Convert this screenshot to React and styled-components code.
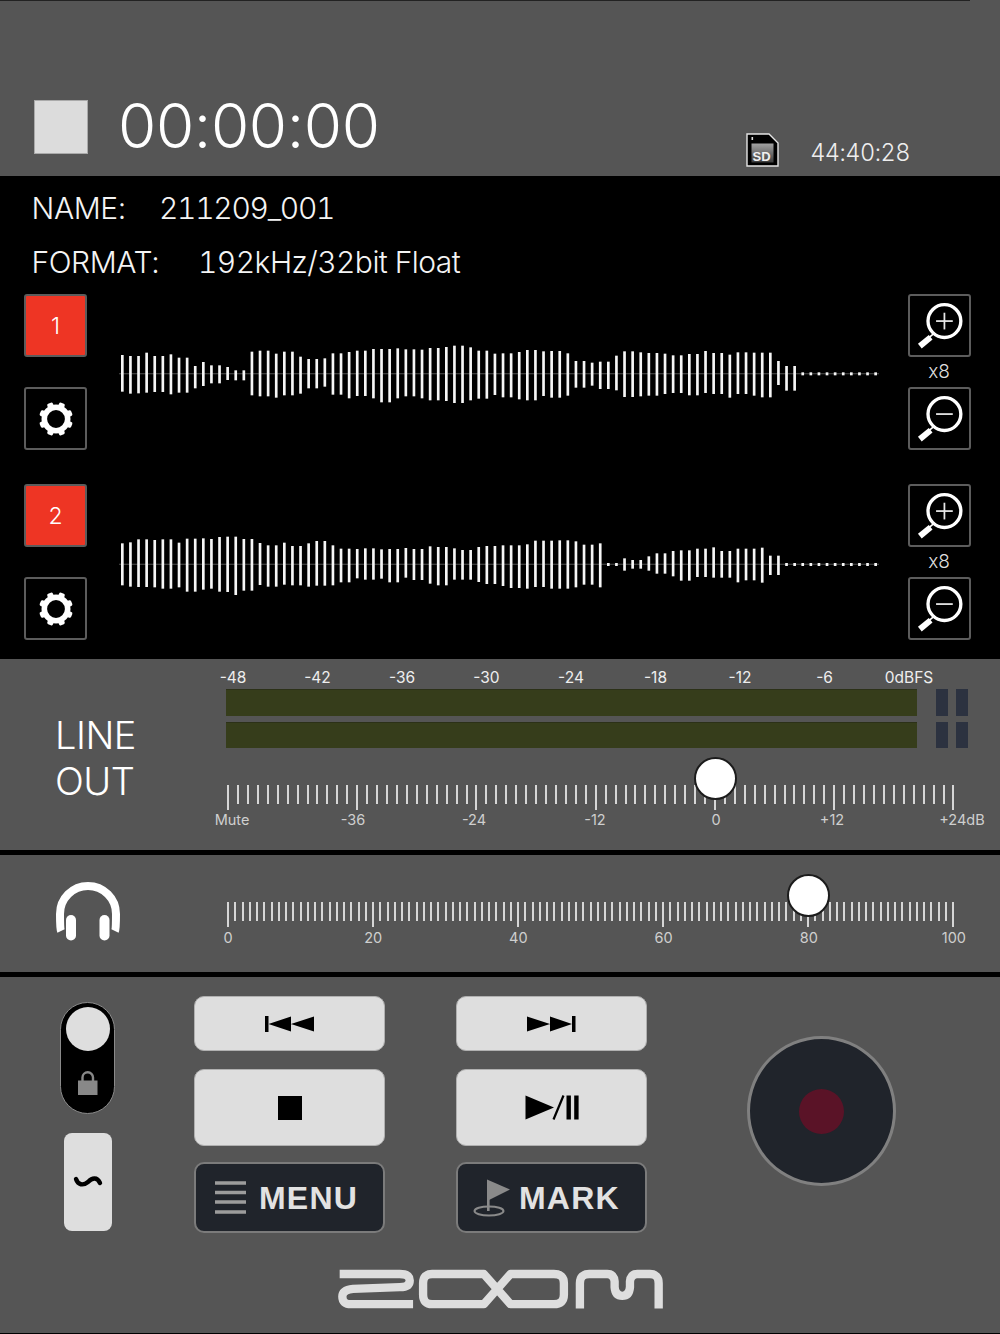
import React from "react";
import styled, { createGlobalStyle } from "styled-components";

const Global = createGlobalStyle`
  html, body { margin: 0; padding: 0; background: #555; }
  body { font-family: Inter, "Noto Sans", "Liberation Sans", sans-serif; }
`;

const Page = styled.div`
  width: 1000px;
  height: 1334px;
  background: #555;
  overflow: hidden;
  color: #fff;
  border-bottom: 1px solid #000;
  box-sizing: border-box;
`;

const Header = styled.header`
  height: 176px;
  box-sizing: border-box;
  display: flex;
  align-items: flex-start;
  padding: 100px 90px 0 34px;
  background: linear-gradient(#222 0 1px, #555 1px) no-repeat 0 0 / 970px 100%, #555;
`;
const StopState = styled.div`
  width: 54px;
  height: 54px;
  box-sizing: border-box;
  background: #dcdcdc;
  border: 1px solid #aaa;
`;
const Timer = styled.div`
  font-size: 62px;
  font-weight: 350;
  line-height: 52px;
  margin-left: 30px;
  letter-spacing: -0.4px;
  color: #fff;
`;
const Remain = styled.div`
  margin-left: auto;
  margin-top: 33px;
  display: flex;
  align-items: flex-start;
  gap: 31px;
`;
const RemainText = styled.span`
  font-size: 23.5px;
  font-weight: 300;
  line-height: 39px;
  color: #eee;
  font-variant-numeric: tabular-nums;
  letter-spacing: -0.5px;
`;

const Panel = styled.section`
  height: 483px;
  box-sizing: border-box;
  background: #000;
  padding: 5px 30px 0 24px;
`;
const InfoRow = styled.div`
  display: flex;
  height: 54px;
  align-items: center;
  margin-left: 7.5px;
  font-size: 30px;
  font-weight: 300;
  color: #f4f4f4;
`;
const InfoLabel = styled.span`
  width: ${(p) => p.$w}px;
  letter-spacing: -0.4px;
`;
const InfoValue = styled.span`
  font-variant-numeric: tabular-nums;
  letter-spacing: ${(p) => p.$track}px;
`;
const Track = styled.div`
  display: flex;
  height: 156px;
  margin-top: ${(p) => p.$top}px;
`;
const ButtonStack = styled.div`
  width: 62px;
  display: flex;
  flex-direction: column;
  justify-content: space-between;
  align-items: center;
`;
const SquareBtn = styled.div`
  width: 63px;
  height: 63px;
  box-sizing: border-box;
  border: 2px solid #5c5c5c;
  border-radius: 3px;
  background: ${(p) => (p.$on ? "#ee3524" : "#000")};
  color: #fff;
  display: flex;
  align-items: center;
  justify-content: center;
  font-size: 23px;
  font-weight: 300;
  padding-left: 1px;
`;
const WaveWrap = styled.div`
  flex: 1;
  padding: 41px 0 0 33px;
`;
const Zoomed = styled.span`
  font-size: 19px;
  font-weight: 300;
  color: #ddd;
  line-height: 20px;
`;

const LineSection = styled.section`
  height: 191px;
  box-sizing: border-box;
  display: flex;
  background: #555;
`;
const Divider = styled.div`
  height: ${(p) => p.$h}px;
  background: #000;
`;
const SideCol = styled.div`
  width: 150px;
  flex: none;
  box-sizing: border-box;
  padding-left: 56px;
  padding-top: ${(p) => p.$top}px;
`;
const BigLabel = styled.div`
  font-size: 38px;
  font-weight: 300;
  line-height: 46px;
  letter-spacing: -0.5px;
  margin-left: -1px;
  color: #fff;
`;
const MainCol = styled.div`
  flex: 1;
  min-width: 0;
`;
const DbLabels = styled.div`
  display: grid;
  grid-template-columns: repeat(9, 84.5px);
  padding: 10px 0 2px 40.75px;
  font-size: 15.5px;
  line-height: 18px;
  color: #eee;
  text-align: center;
`;
const MeterRow = styled.div`
  display: flex;
  margin: ${(p) => p.$top}px 0 0 76px;
  height: 26.5px;
`;
const Meter = styled.div`
  width: 691px;
  box-sizing: border-box;
  background: #363d1b;
  border-top: 1px solid #2c3118;
`;
const Clip = styled.div`
  width: 12px;
  margin-left: ${(p) => p.$gap}px;
  background: #2c3240;
`;
const Scale = styled.div`
  position: relative;
  width: 728px;
  margin: ${(p) => p.$top}px 0 0 77px;
  display: flex;
  justify-content: space-between;
  align-items: flex-start;
`;
const Tick = styled.i`
  display: block;
  width: 2px;
  height: ${(p) => (p.$long ? 25 : 19)}px;
  background: #d6d6d6;
`;
const Knob = styled.div`
  position: absolute;
  top: -28px;
  left: ${(p) => p.$left}px;
  width: 43px;
  height: 43px;
  box-sizing: border-box;
  border-radius: 50%;
  background: radial-gradient(circle, #fff 0 72%, #e8e8e8 84%, #8c8c8c 100%);
  border: 2px solid #1c1c1c;
`;
const ScaleLabels = styled.div`
  display: grid;
  grid-template-columns: ${(p) => p.$cols};
  margin: ${(p) => p.$top}px 0 0 ${(p) => p.$left}px;
  font-size: 14.5px;
  line-height: 15px;
  color: #cfcfcf;
  text-align: center;
`;
const PhoneSection = styled.section`
  height: 117px;
  display: flex;
  background: #555;
`;

const Controls = styled.section`
  box-sizing: border-box;
  padding: 19px 0 0;
`;
const ControlRow = styled.div`
  display: flex;
  align-items: flex-start;
  padding-left: 60px;
`;
const LeftCol = styled.div`
  width: 55px;
  padding-top: 6px;
  display: flex;
  flex-direction: column;
  align-items: center;
  gap: 19px;
`;
const LockToggle = styled.div`
  width: 55px;
  height: 112px;
  box-sizing: border-box;
  background: #000;
  border: 1px solid #8a8a8a;
  border-radius: 28px;
  display: flex;
  flex-direction: column;
  align-items: center;
  padding-top: 4px;
`;
const LockThumb = styled.div`
  width: 44px;
  height: 44px;
  border-radius: 50%;
  background: #dedede;
  margin-bottom: 19px;
`;
const TildeBtn = styled.div`
  width: 48px;
  height: 98px;
  border-radius: 8px;
  background: #dedede;
  display: flex;
  align-items: center;
  justify-content: center;
`;
const ButtonGrid = styled.div`
  margin-left: 79px;
  display: grid;
  grid-template-columns: 191px 191px;
  grid-template-rows: 55px 79px 71px;
  column-gap: 71px;
  row-gap: 16px;
`;
const LightBtn = styled.div`
  box-sizing: border-box;
  height: ${(p) => p.$h}px;
  align-self: end;
  background: #dedede;
  border: 1px solid #b0b0b0;
  border-radius: 10px;
  display: flex;
  align-items: center;
  justify-content: center;
`;
const DarkBtn = styled.div`
  box-sizing: border-box;
  background: #20242b;
  border: 2px solid #7b7b7b;
  border-radius: 10px;
  display: flex;
  align-items: center;
  padding-left: ${(p) => p.$pad}px;
  gap: ${(p) => p.$gap}px;
`;
const DarkText = styled.span`
  font-family: "Liberation Sans", Arial, sans-serif;
  font-weight: 700;
  font-size: 32px;
  letter-spacing: 1.2px;
  color: #e2e2e2;
  line-height: 1;
`;
const RecBtn = styled.div`
  margin: 40px 0 0 100px;
  width: 149px;
  height: 150px;
  box-sizing: border-box;
  border-radius: 50%;
  background: #20242b;
  border: 3px solid #808080;
  display: flex;
  align-items: center;
  justify-content: center;
`;
const RecDot = styled.div`
  width: 45px;
  height: 45px;
  border-radius: 50%;
  background: #5a1327;
`;
const LogoWrap = styled.div`
  display: flex;
  justify-content: center;
  margin-top: 35px;
`;

const W1 = [[60,170],[63,176],[63,175],[53,173],[63,171],[63,171],[58,178],[68,173],[68,173],[93,160],[81,153],[91,145],[91,145],[96,135],[106,136],[106,136],[50,181],[47,184],[47,184],[56,188],[50,181],[50,181],[65,176],[72,160],[72,160],[70,155],[55,179],[55,179],[51,190],[47,183],[47,183],[42,190],[42,202],[42,202],[40,190],[43,184],[43,184],[44,190],[39,196],[39,196],[36,198],[32,204],[32,204],[37,196],[47,191],[47,191],[56,180],[55,187],
[55,187],[51,193],[45,196],[45,196],[49,183],[48,188],[48,188],[55,182],[78,158],[78,158],[83,152],[80,162],[80,162],[62,166],[49,186],[49,186],[52,184],[54,182],[54,182],[56,177],[61,174],[61,174],[57,181],[57,181],[48,174],[54,177],[54,177],[59,188],[52,177],[52,177],[53,182],[53,187],[53,187],[78,150],[93,167],[93,167],
...Array(10).fill([112,121])];

const W2 = [[55,181],[52,185],[43,186],[43,186],[45,187],[43,191],[43,191],[53,187],[41,200],[41,200],[40,194],[42,191],[36,200],[35,201],[35,210],[42,197],[42,197],[54,180],[61,185],[61,185],[53,179],[63,181],[63,181],[55,185],[48,182],[48,182],[61,181],[71,172],[71,172],[72,160],[70,164],[70,164],[73,161],[72,172],[72,172],[69,158],[72,165],[72,165],[64,176],[66,181],[66,181],[70,164],[75,164],[75,164],[66,171],[63,177],[63,177],[61,183],
[61,189],[61,189],[58,191],[47,186],[47,186],[47,191],[46,191],[46,191],[49,187],[59,179],[59,179],[55,187],
[114,123],[114,123],
[100,137],[105,131],[105,131],[94,137],[85,146],[85,146],[78,154],[76,167],[76,167],[71,156],[71,156],[67,158],[78,158],[78,158],[71,172],[71,166],[71,166],[68,173],[92,150],[92,150],
...Array(12).fill([114,123])];

function Wave({ data, center, line }) {
  return (
    <svg width="760" height="80" viewBox="0 0 2280 240" style={{ display: "block" }}>
      <rect x="0" y={center - 2} width="2280" height="4" fill={line} />
      {data.map((b, i) => (
        <rect key={i} x={10 + i * 24.3 - 4} y={b[0]} width="8" height={b[1] - b[0]} fill="#f6f6f6" />
      ))}
    </svg>
  );
}

function Gear() {
  const t = [22.5, 67.5, 112.5, 157.5, 202.5, 247.5, 292.5, 337.5];
  return (
    <svg width="36" height="36" viewBox="0 0 36 36">
      <circle cx="18" cy="18" r="11.7" fill="none" stroke="#fff" strokeWidth="5.6" />
      {t.map((a) => (
        <rect key={a} x="15" y="1" width="6" height="6" rx="1.6" fill="#fff" transform={`rotate(${a} 18 18)`} />
      ))}
    </svg>
  );
}

function Magnifier({ plus }) {
  return (
    <svg width="59" height="59" viewBox="0 0 59 59">
      <circle cx="34" cy="25" r="16.7" fill="none" stroke="#fff" strokeWidth="3.4" />
      <path d="M24 37 L18 42" stroke="#fff" strokeWidth="1.6" />
      <path d="M9 50.5 L20 41.5" stroke="#fff" strokeWidth="6" />
      <path d="M25.5 25 H42.5" stroke="#e8e8e8" strokeWidth="1.8" />
      {plus && <path d="M34 16.5 V33.5" stroke="#e8e8e8" strokeWidth="1.8" />}
    </svg>
  );
}

function SdIcon() {
  return (
    <svg width="33" height="34" viewBox="0 0 33 34" style={{ display: "block" }}>
      <defs>
        <linearGradient id="sdg" x1="0" y1="0" x2="0" y2="1">
          <stop offset="0" stopColor="#a2a2a2" />
          <stop offset="1" stopColor="#3c3c3c" />
        </linearGradient>
      </defs>
      <path d="M1 1 H23 L32 10 V33 H1 Z" fill="#000" stroke="#e4e4e4" strokeWidth="1.4" />
      <rect x="5.5" y="10.5" width="22" height="19" fill="url(#sdg)" />
      <rect x="5.5" y="4" width="1.6" height="3" fill="#ddd" />
      <text x="15.5" y="28" textAnchor="middle" fontFamily="Liberation Sans, sans-serif" fontWeight="700" fontSize="13" fill="#f0f0f0">SD</text>
    </svg>
  );
}

function Headphones() {
  return (
    <svg width="64" height="60" viewBox="0 0 64 60" style={{ display: "block" }}>
      <path d="M5 49 Q4 47 4 32 A28 28 0 0 1 60 32 Q60 47 59 49" fill="none" stroke="#fff" strokeWidth="8" />
      <rect x="10" y="33" width="10" height="25.5" rx="5" fill="#fff" />
      <rect x="43.5" y="33" width="10" height="25.5" rx="5" fill="#fff" />
    </svg>
  );
}

function Lock() {
  return (
    <svg width="22" height="26" viewBox="0 0 22 26">
      <path d="M5.5 13 V7.5 A5.2 5.2 0 0 1 16 7.5 V13" fill="none" stroke="#888" strokeWidth="2.4" />
      <rect x="1" y="10.5" width="19.5" height="14.5" fill="#888" />
    </svg>
  );
}

const Tilde = () => (
  <svg width="30" height="16" viewBox="0 0 30 16">
    <path d="M3 5 C5 11 10 12 15 8 C19 4 24 2.5 27 9" fill="none" stroke="#000" strokeWidth="4.4" strokeLinecap="round" />
  </svg>
);

const Prev = () => (
  <svg width="50" height="16" viewBox="0 0 50 16">
    <rect x="0" y="0" width="3.5" height="16" fill="#000" />
    <path d="M3.5 8 L26 0.5 V15.5 Z M26 8 L49 0.5 V15.5 Z" fill="#000" />
  </svg>
);
const Next = () => (
  <svg width="50" height="16" viewBox="0 0 50 16" style={{ marginRight: 2 }}>
    <rect x="46" y="0" width="3.5" height="16" fill="#000" />
    <path d="M46 8 L24 0.5 V15.5 Z M24 8 L1 0.5 V15.5 Z" fill="#000" />
  </svg>
);
const StopIcon = () => (
  <svg width="24" height="24" viewBox="0 0 24 24" style={{ display: "block" }}>
    <rect width="24" height="24" fill="#000" />
  </svg>
);
const PlayPause = () => (
  <svg width="54" height="25" viewBox="0 0 54 25">
    <path d="M0.5 0.5 L29 12.5 L0.5 24.5 Z" fill="#000" />
    <path d="M28.5 24.5 L38.5 0.5" stroke="#000" strokeWidth="2.2" />
    <rect x="41.5" y="0.5" width="4.4" height="24" fill="#000" />
    <rect x="49.2" y="0.5" width="4.4" height="24" fill="#000" />
  </svg>
);
const MenuIcon = () => (
  <svg width="31" height="33" viewBox="0 0 31 33" style={{ display: "block" }}>
    <path d="M0 2 H31 M0 11.5 H31 M0 21 H31 M0 31 H31" stroke="#9c9c9c" strokeWidth="3.4" />
  </svg>
);
const FlagIcon = () => (
  <svg width="38" height="38" viewBox="0 0 38 38" style={{ display: "block" }}>
    <path d="M14 0.5 L37 10.5 L14 22 Z" fill="#8a8a8a" />
    <rect x="14" y="20" width="2.6" height="12" fill="#8a8a8a" />
    <ellipse cx="16" cy="32" rx="14.5" ry="4.6" fill="none" stroke="#8a8a8a" strokeWidth="2" />
  </svg>
);

const Logo = () => (
  <svg width="327" height="42" viewBox="50 55 980 125" style={{ display: "block" }}>
    <g fill="none" stroke="#dedede" strokeWidth="25" strokeLinejoin="round">
      <path d="M58 72.5 H238 Q268 72.5 268 92 Q268 112 238 112 L98 117 Q66 120 66 140 Q66 163 92 163 H278" />
      <path d="M335 72.5 H490 L570 163 H700 Q730 163 730 135 V100 Q730 72.5 700 72.5 H570 L490 163 H335 Q308 163 308 135 V100 Q308 72.5 335 72.5 Z" />
      <path d="M778 176 V100 Q778 72.5 806 72.5 H860 Q880 72.5 882 95 V112 Q884 138 905 138 Q926 138 928 112 V95 Q930 72.5 950 72.5 H988 Q1014 72.5 1014 100 V176" />
    </g>
  </svg>
);

const range = (n) => Array.from({ length: n }, (_, i) => i);
const LINE_LONG = [0, 13, 25, 37, 49, 61, 73];

const App = () => (
  <Page>
    <Global />
    <Header>
      <StopState />
      <Timer>00:00:00</Timer>
      <Remain>
        <SdIcon />
        <RemainText>44:40:28</RemainText>
      </Remain>
    </Header>

    <Panel>
      <InfoRow><InfoLabel $w={127.5}>NAME:</InfoLabel><InfoValue $track={-1.3}>211209_001</InfoValue></InfoRow>
      <InfoRow><InfoLabel $w={166.5}>FORMAT:</InfoLabel><InfoValue $track={-0.55}>192kHz/32bit Float</InfoValue></InfoRow>
      <Track $top={5}>
        <ButtonStack>
          <SquareBtn $on>1</SquareBtn>
          <SquareBtn><Gear /></SquareBtn>
        </ButtonStack>
        <WaveWrap><Wave data={W1} center={116} line="#3c3c3c" /></WaveWrap>
        <ButtonStack>
          <SquareBtn><Magnifier plus /></SquareBtn>
          <Zoomed>x8</Zoomed>
          <SquareBtn><Magnifier /></SquareBtn>
        </ButtonStack>
      </Track>
      <Track $top={34}>
        <ButtonStack>
          <SquareBtn $on>2</SquareBtn>
          <SquareBtn><Gear /></SquareBtn>
        </ButtonStack>
        <WaveWrap><Wave data={W2} center={118} line="#3c3c3c" /></WaveWrap>
        <ButtonStack>
          <SquareBtn><Magnifier plus /></SquareBtn>
          <Zoomed>x8</Zoomed>
          <SquareBtn><Magnifier /></SquareBtn>
        </ButtonStack>
      </Track>
    </Panel>

    <LineSection>
      <SideCol $top={52.5}>
        <BigLabel>LINE<br />OUT</BigLabel>
      </SideCol>
      <MainCol>
        <DbLabels>
          {["-48","-42","-36","-30","-24","-18","-12","-6","0dBFS"].map((l) => <span key={l}>{l}</span>)}
        </DbLabels>
        <MeterRow $top={0}><Meter /><Clip $gap={19} /><Clip $gap={8} /></MeterRow>
        <MeterRow $top={6}><Meter /><Clip $gap={19} /><Clip $gap={8} /></MeterRow>
        <Scale $top={37}>
          {range(74).map((i) => <Tick key={i} $long={LINE_LONG.includes(i)} />)}
          <Knob $left={466.7} />
        </Scale>
        <ScaleLabels $top={2} $left={64} $cols="36px 206px 36px 206px 36px 196px 64px">
          {["Mute","-36","-24","-12","0","+12","+24dB"].map((l) => <span key={l}>{l}</span>)}
        </ScaleLabels>
      </MainCol>
    </LineSection>
    <Divider $h={5} />

    <PhoneSection>
      <SideCol $top={27}><Headphones /></SideCol>
      <MainCol>
        <Scale $top={47}>
          {range(101).map((i) => <Tick key={i} $long={i % 20 === 0} />)}
          <Knob $left={560.3} />
        </Scale>
        <ScaleLabels $top={3} $left={5.4} $cols="repeat(6, 145.2px)">
          {["0","20","40","60","80","100"].map((l) => <span key={l}>{l}</span>)}
        </ScaleLabels>
      </MainCol>
    </PhoneSection>
    <Divider $h={5} />

    <Controls>
      <ControlRow>
        <LeftCol>
          <LockToggle>
            <LockThumb />
            <Lock />
          </LockToggle>
          <TildeBtn><Tilde /></TildeBtn>
        </LeftCol>
        <ButtonGrid>
          <LightBtn $h={55}><Prev /></LightBtn>
          <LightBtn $h={55}><Next /></LightBtn>
          <LightBtn $h={77}><StopIcon /></LightBtn>
          <LightBtn $h={77}><PlayPause /></LightBtn>
          <DarkBtn $pad={19} $gap={13}><MenuIcon /><DarkText>MENU</DarkText></DarkBtn>
          <DarkBtn $pad={15} $gap={8}><FlagIcon /><DarkText>MARK</DarkText></DarkBtn>
        </ButtonGrid>
        <RecBtn><RecDot /></RecBtn>
      </ControlRow>
      <LogoWrap><Logo /></LogoWrap>
    </Controls>
  </Page>
);

export default App;
